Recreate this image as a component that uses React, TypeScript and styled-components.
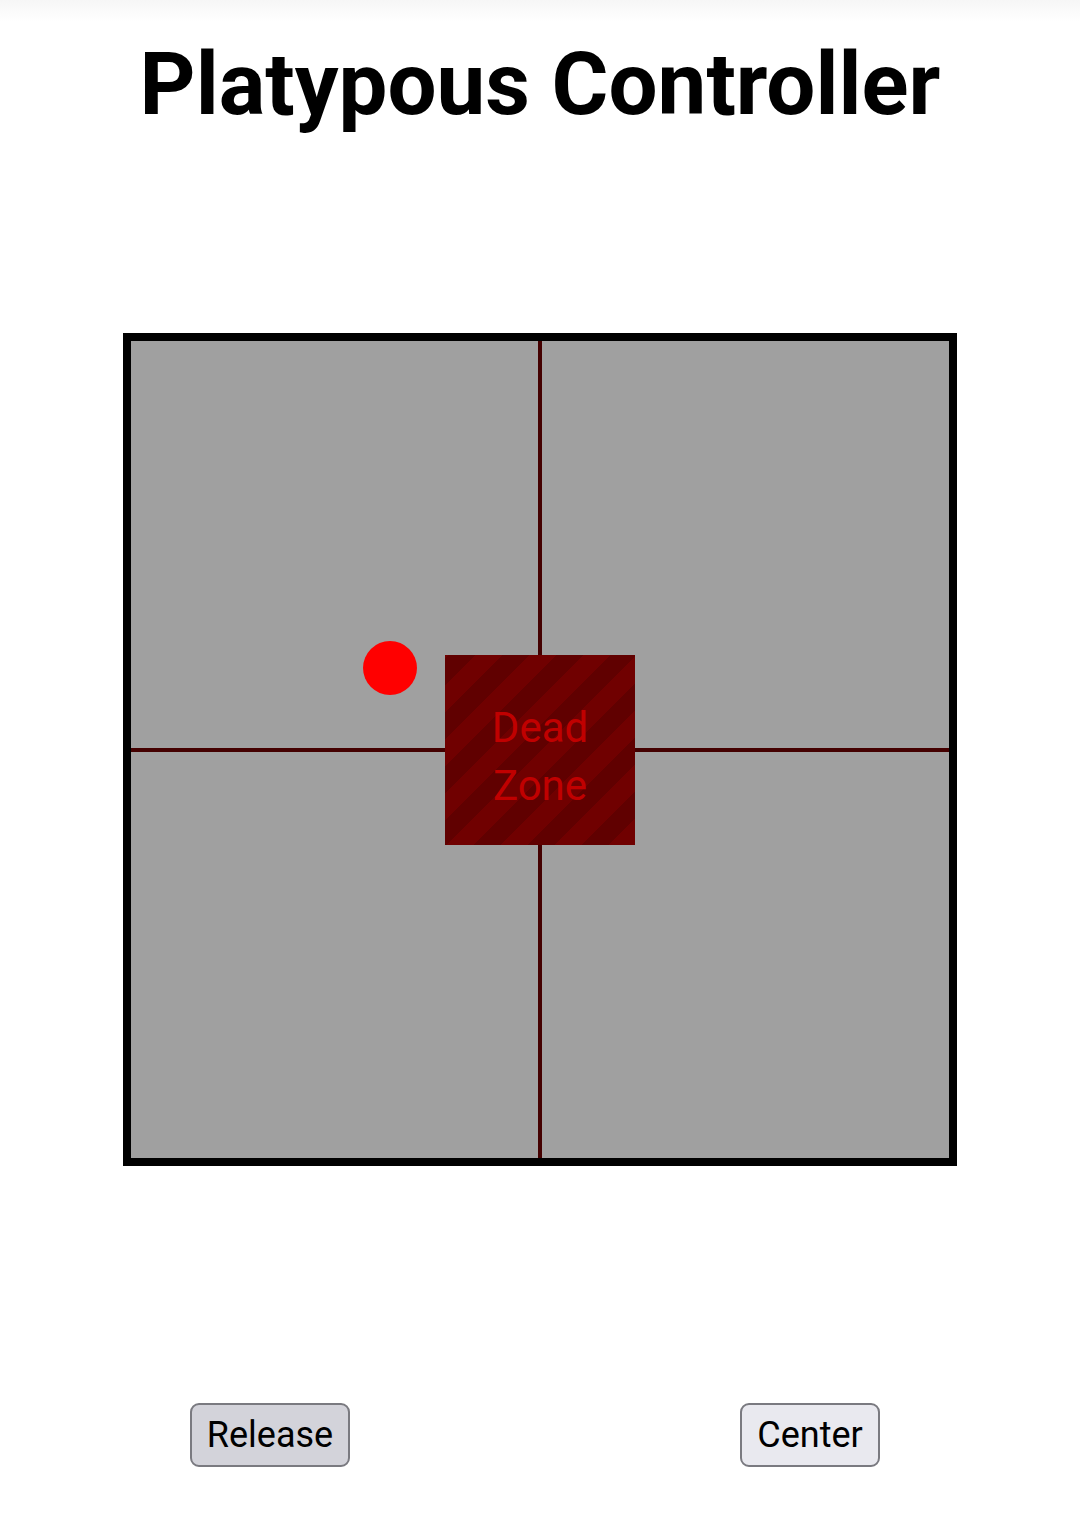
import React from 'react';
import styled, { createGlobalStyle } from 'styled-components';

const GlobalStyle = createGlobalStyle`
  html, body {
    margin: 0;
    padding: 0;
    background: linear-gradient(#f6f6f6 0px, #ffffff 22px) no-repeat;
    background-color: #ffffff;
    font-family: Roboto, 'Liberation Sans', sans-serif;
  }
`;

const Page = styled.div`
  width: 1080px;
  height: 1520px;
  display: flex;
  flex-direction: column;
  align-items: center;
`;

const Title = styled.h1`
  margin: 34px 0 0;
  font-size: 87px;
  font-weight: 700;
  line-height: 100px;
  color: #000;
`;

const Pad = styled.div`
  margin-top: 199px;
  width: 818px;
  height: 817px;
  border: 8px solid #000;
  background: #a0a0a0;
  position: relative;
`;

const Line = styled.div<{ $vertical?: boolean }>`
  position: absolute;
  background: #440000;
  ${(p) =>
    p.$vertical
      ? 'left: 407px; top: 0; width: 4px; height: 100%;'
      : 'top: 407px; left: 0; height: 4px; width: 100%;'}
`;

const DeadZone = styled.div`
  position: absolute;
  left: 314px;
  top: 314px;
  width: 190px;
  height: 190px;
  box-sizing: border-box;
  padding-top: 14px;
  background: repeating-linear-gradient(
    -45deg,
    #700000 0px,
    #700000 19px,
    #600000 19px,
    #600000 38px
  );
  display: flex;
  align-items: center;
  justify-content: center;
  text-align: center;
  color: #c00000;
  font-size: 42px;
  line-height: 58px;
`;

const Dot = styled.div`
  position: absolute;
  left: 232px;
  top: 300px;
  width: 54px;
  height: 54px;
  border-radius: 50%;
  background: #ff0000;
`;

const Controls = styled.div`
  margin-top: 237px;
  width: 100%;
  display: grid;
  grid-template-columns: 1fr 1fr;
  justify-items: center;
`;

const Button = styled.button<{ $pressed?: boolean }>`
  height: 64px;
  padding: 0 15px;
  border: 2px solid #7a7a80;
  border-radius: 9px;
  background: ${(p) => (p.$pressed ? '#d3d3da' : '#e9e9ef')};
  font-family: Roboto, 'Liberation Sans', sans-serif;
  font-size: 36px;
  color: #000;
`;

export default function App() {
  return (
    <>
      <GlobalStyle />
      <Page>
        <Title>Platypous Controller</Title>
        <Pad>
          <Line $vertical />
          <Line />
          <DeadZone>
            Dead
            <br />
            Zone
          </DeadZone>
          <Dot />
        </Pad>
        <Controls>
          <Button $pressed>Release</Button>
          <Button>Center</Button>
        </Controls>
      </Page>
    </>
  );
}
